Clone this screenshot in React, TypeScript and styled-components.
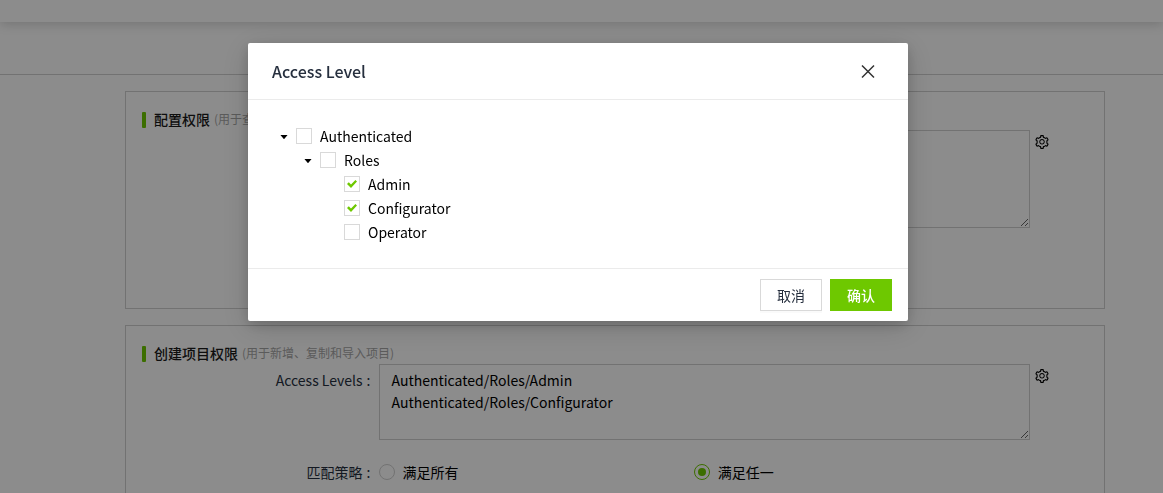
import React, { useState } from 'react';
import styled, { createGlobalStyle } from 'styled-components';
import { AiOutlineSetting, AiFillCaretDown } from 'react-icons/ai';

const GREEN = '#6ec800';

const GlobalStyle = createGlobalStyle`
  *, *::before, *::after { box-sizing: border-box; }
  body {
    margin: 0;
    overflow: hidden;
    background: #fff;
    color: #000;
    font: 14px/22px "Noto Sans CJK SC", "Noto Sans", sans-serif;
  }
  button, input, textarea { font: inherit; color: inherit; margin: 0; }
`;

const Page = styled.div`
  display: flex;
  flex-direction: column;
  height: 100vh;
  overflow: hidden;
`;

const TopBar = styled.header`
  flex: none;
  height: 22px;
  position: relative;
  background: #fff;
  box-shadow: 0 2px 12px rgba(0, 0, 0, 0.18);
`;

const SubBar = styled.div`
  flex: none;
  height: 53px;
  border-bottom: 1px solid #d0d0d0;
`;

const Content = styled.main`
  display: flex;
  flex-direction: column;
  gap: 16px;
  padding: 16px 58px 16px 125px;
`;

const Card = styled.section`
  padding: 16px;
  border: 1px solid #d0d0d0;
`;

const CardHeading = styled.h2`
  display: flex;
  align-items: center;
  margin: 0;
  font-size: 14px;
  font-weight: 500;
  line-height: 22px;
  color: #1a1a1a;

  &::before {
    content: '';
    width: 4px;
    height: 16px;
    margin: 2px 8px 0 0;
    border-radius: 1px;
    background: ${GREEN};
  }
`;

const Hint = styled.small`
  margin-left: 4px;
  font-size: 12px;
  font-weight: 400;
  color: #a6a6a6;
`;

const FormRow = styled.div`
  display: grid;
  grid-template-columns: 6fr 18fr;
  min-height: 32px;
  margin-bottom: 16px;
`;

const FormLabel = styled.label`
  line-height: 32px;
  text-align: right;
  color: #262f3e;
`;

const Colon = styled.span`
  margin: 0 8px 0 4px;
`;

const AreaWrap = styled.div`
  display: flex;
  grid-column: 2;
  align-items: flex-start;
  gap: 4px;
  padding-right: 38px;
`;

const Area = styled.textarea`
  display: block;
  flex: 1;
  min-width: 0;
  padding: 4px 12px;
  border: 1px solid #d0d0d0;
  border-radius: 0;
  background: #fff;
  line-height: 22px;
  resize: vertical;
  outline: none;
`;

const IconButton = styled.button`
  display: flex;
  padding: 0;
  border: 0;
  background: none;
  cursor: pointer;
`;

const GearButton = styled(IconButton)`
  margin-top: 4px;
`;

const RadioGroup = styled.div`
  display: grid;
  grid-template-columns: 4fr 4fr 1fr;
  align-items: center;
`;

const Choice = styled.label`
  display: flex;
  align-items: center;
  gap: 8px;
`;

const Radio = styled.input`
  display: grid;
  place-items: center;
  appearance: none;
  width: 16px;
  height: 16px;
  border: 1px solid #d0d0d0;
  border-radius: 50%;
  background: #fff;

  &:checked { border-color: ${GREEN}; }
  &:checked::after {
    content: '';
    width: 8px;
    height: 8px;
    border-radius: 50%;
    background: ${GREEN};
  }
`;

const Mask = styled.div`
  position: fixed;
  inset: 0;
  background: rgba(0, 0, 0, 0.45);
`;

const ModalLayer = styled.div`
  position: fixed;
  inset: 0;
  display: flex;
  justify-content: center;
  align-items: flex-start;
  padding: 43px 7px 0 0;
`;

const Modal = styled.div`
  width: 660px;
  max-width: 100%;
  border-radius: 2px;
  background: #fff;
  box-shadow: 0 4px 12px rgba(0, 0, 0, 0.15), 0 6px 30px rgba(0, 0, 0, 0.16);
`;

const ModalHeader = styled.div`
  display: flex;
  align-items: center;
  justify-content: space-between;
  padding: 16px 32px 16px 24px;
  border-bottom: 1px solid #ebebeb;
`;

const ModalTitle = styled.h1`
  margin: 0;
  font-size: 16px;
  font-weight: 500;
  line-height: 24px;
  color: #262f3e;
`;

const ModalFooter = styled.div`
  display: flex;
  justify-content: flex-end;
  gap: 8px;
  padding: 10px 16px;
  border-top: 1px solid #ebebeb;
`;

const Button = styled.button<{ $primary?: boolean }>`
  height: 32px;
  padding: 0 16px;
  border: 1px solid ${(p) => (p.$primary ? GREEN : '#d9d9d9')};
  background: ${(p) => (p.$primary ? GREEN : '#fff')};
  color: ${(p) => (p.$primary ? '#fff' : '#262f3e')};
  font-weight: ${(p) => (p.$primary ? 500 : 400)};
  box-shadow: ${(p) => (p.$primary ? 'none' : '0 2px 0 rgba(0, 0, 0, 0.02)')};
  cursor: pointer;
`;

const Tree = styled.ul`
  margin: 0;
  padding: 24px;
  list-style: none;
`;

const TreeRow = styled.li<{ $level: number }>`
  display: flex;
  align-items: center;
  height: 24px;
  padding-left: ${(p) => p.$level * 24}px;
`;

const Switcher = styled(IconButton)`
  width: 24px;
  height: 24px;
  padding-top: 1px;
  align-items: center;
  justify-content: center;
`;

const SwitcherSpace = styled.span`
  width: 24px;
`;

const Checkbox = styled.input`
  display: grid;
  place-items: center;
  appearance: none;
  width: 16px;
  height: 16px;
  border: 1px solid #d9d9d9;
  background: #fff;

  &:checked::after {
    content: '';
    width: 10px;
    height: 8px;
    background: ${GREEN};
    clip-path: polygon(0 50%, 18% 28%, 40% 56%, 84% 0, 100% 20%, 40% 100%);
  }
`;

type Item = { name: string; level: number; parent?: boolean };

const items: Item[] = [
  { name: 'Authenticated', level: 0, parent: true },
  { name: 'Roles', level: 1, parent: true },
  { name: 'Admin', level: 2 },
  { name: 'Configurator', level: 2 },
  { name: 'Operator', level: 2 },
];

type SectionProps = {
  id: string;
  title: string;
  hint: string;
  rows: number;
  value?: string;
  editable?: boolean;
};

function CloseIcon() {
  return (
    <svg width="16" height="16" viewBox="0 0 16 16" fill="none" stroke="#333" strokeWidth="1.5">
      <path d="M2 2.5l12 12M14 2.5l-12 12" />
    </svg>
  );
}

function PermissionCard({ id, title, hint, rows, value, editable }: SectionProps) {
  return (
    <Card>
      <CardHeading>
        {title}
        <Hint>{hint}</Hint>
      </CardHeading>
      <FormRow>
        {editable && (
          <FormLabel htmlFor={id}>
            Access Levels<Colon>:</Colon>
          </FormLabel>
        )}
        <AreaWrap>
          <Area id={id} rows={rows} defaultValue={value} aria-label="Access Levels" />
          <GearButton type="button" aria-label="Access Levels">
            <AiOutlineSetting size={16} />
          </GearButton>
        </AreaWrap>
      </FormRow>
      <FormRow>
        {editable && (
          <>
            <FormLabel as="span" id={`${id}-match`}>
              匹配策略<Colon>:</Colon>
            </FormLabel>
            <RadioGroup role="radiogroup" aria-labelledby={`${id}-match`}>
              <Choice>
                <Radio type="radio" name={`${id}-match`} />
                满足所有
              </Choice>
              <Choice>
                <Radio type="radio" name={`${id}-match`} defaultChecked />
                满足任一
              </Choice>
            </RadioGroup>
          </>
        )}
      </FormRow>
    </Card>
  );
}

export default function App() {
  const [checked, setChecked] = useState<string[]>(['Admin', 'Configurator']);
  const toggle = (name: string) =>
    setChecked((c) => (c.includes(name) ? c.filter((n) => n !== name) : [...c, name]));

  return (
    <>
      <GlobalStyle />
      <Page>
        <TopBar />
        <SubBar />
        <Content>
          <PermissionCard id="config" title="配置权限" hint="(用于查" rows={4} />
          <PermissionCard
            id="create"
            title="创建项目权限"
            hint="(用于新增、复制和导入项目)"
            rows={3}
            value={'Authenticated/Roles/Admin\nAuthenticated/Roles/Configurator'}
            editable
          />
        </Content>
      </Page>
      <Mask />
      <ModalLayer>
        <Modal role="dialog" aria-modal="true" aria-labelledby="modal-title">
          <ModalHeader>
            <ModalTitle id="modal-title">Access Level</ModalTitle>
            <IconButton type="button" aria-label="Close">
              <CloseIcon />
            </IconButton>
          </ModalHeader>
          <Tree>
            {items.map(({ name, level, parent }) => (
              <TreeRow key={name} $level={level}>
                {parent ? (
                  <Switcher type="button" aria-label={name}>
                    <AiFillCaretDown size={10} />
                  </Switcher>
                ) : (
                  <SwitcherSpace />
                )}
                <Choice>
                  <Checkbox
                    type="checkbox"
                    checked={checked.includes(name)}
                    onChange={() => toggle(name)}
                  />
                  {name}
                </Choice>
              </TreeRow>
            ))}
          </Tree>
          <ModalFooter>
            <Button type="button">取消</Button>
            <Button type="button" $primary>确认</Button>
          </ModalFooter>
        </Modal>
      </ModalLayer>
    </>
  );
}
